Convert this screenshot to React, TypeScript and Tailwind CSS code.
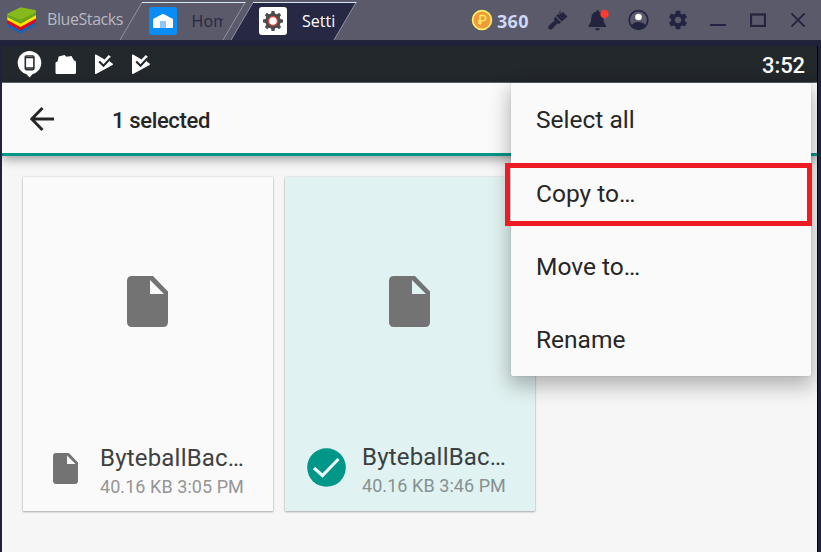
import type { ReactNode } from "react";

const ROBOTO = "font-['Roboto','Liberation_Sans',sans-serif]";
const SEGOE = "font-['Open_Sans','Noto_Sans',sans-serif]";

function Logo() {
  return (
    <svg width="30" height="27" viewBox="0 0 30 27" className="shrink-0">
      <path d="M0.3 15.5 L13.5 22 L29 14 V18.4 L14.5 26 Q13.5 26.5 12.5 26 L0.3 19.8 Z" fill="#1566b4" />
      <path d="M0.3 12.5 L13.5 18 L29 11 V15 L13.5 23.6 L0.3 16.4 Z" fill="#dd0a22" />
      <path d="M0.3 9.5 L13.5 14 L29 7.5 V11.5 L13.5 20 L0.3 13 Z" fill="#ffe500" />
      <path d="M0.3 6.8 L12.5 0.7 Q13.5 0.3 14.8 0.5 L28 3 Q29 3.2 29 4.2 V8 L15 16 Q13.5 16.8 12 16 L0.3 10 Z" fill="#86b91c" />
      <path d="M0.3 7.5 L13.5 13 L29 5 V8 L15 16 Q13.5 16.8 12 16 L0.3 10 Z" fill="#6aa51f" />
    </svg>
  );
}

function Tab({ active, icon, label, className }: { active?: boolean; icon: ReactNode; label: string; className: string }) {
  return (
    <div className={`relative h-10 w-[126px] shrink-0 ${className}`}>
      <svg width="126" height="40" viewBox="0 0 126 40" className="absolute inset-0">
        <path d="M0 40 L22 2.5 H125 L103 40 Z" fill={active ? "#272843" : "#5a5a6b"} />
        <path d="M0 40 L22 2.5" stroke="#8f93a5" strokeWidth="1" fill="none" />
        <path d="M125 2.5 L103 40" stroke="#8f93a5" strokeWidth="1" fill="none" />
        <path d="M22 2.5 H125.5" stroke="#d6e8f4" strokeWidth="1" fill="none" />
      </svg>
      <div className={`relative flex h-10 items-center pt-[2px] ${active ? "pl-[28px]" : "pl-[28.5px]"}`}>
        {icon}
        <span
          className={`ml-[15px] h-6 w-[31px] text-[16px] leading-6 whitespace-nowrap ${SEGOE} ${active ? "text-white" : "overflow-hidden tracking-[0.2px] text-[#27283f]"}`}
        >
          {label}
        </span>
      </div>
    </div>
  );
}

const GEAR =
  "M19.43 12.98c.04-.32.07-.64.07-.98s-.03-.66-.07-.98l2.11-1.65c.19-.15.24-.42.12-.64l-2-3.46c-.12-.22-.39-.3-.61-.22l-2.49 1c-.52-.4-1.08-.73-1.69-.98l-.38-2.65C14.46 2.18 14.25 2 14 2h-4c-.25 0-.46.18-.49.42l-.38 2.65c-.61.25-1.17.59-1.69.98l-2.49-1c-.23-.09-.49 0-.61.22l-2 3.46c-.13.22-.07.49.12.64l2.11 1.65c-.04.32-.07.65-.07.98s.03.66.07.98l-2.11 1.65c-.19.15-.24.42-.12.64l2 3.46c.12.22.39.3.61.22l2.49-1c.52.4 1.08.73 1.69.98l.38 2.65c.03.24.24.42.49.42h4c.25 0 .46-.18.49-.42l.38-2.65c.61-.25 1.17-.59 1.69-.98l2.49 1c.23.09.49 0 .61-.22l2-3.46c.12-.22.07-.49-.12-.64l-2.11-1.65zM12 15.5c-1.93 0-3.5-1.57-3.5-3.5s1.57-3.5 3.5-3.5 3.5 1.57 3.5 3.5-1.57 3.5-3.5 3.5z";

function HomeIcon() {
  return (
    <svg width="28" height="28" viewBox="0 0 28 28" className="shrink-0">
      <rect width="28" height="28" rx="3" fill="#0a8cf5" />
      <path d="M4 12 L13 7.2 Q14 6.7 15 7.2 L24 12 V20 Q24 21 23 21 H5 Q4 21 4 20 Z" fill="#fff" />
      <rect x="11" y="14" width="6" height="7" fill="#8fc8f8" />
    </svg>
  );
}

function SettingsTabIcon() {
  return (
    <svg width="28" height="28" viewBox="0 0 28 28" className="shrink-0">
      <rect width="28" height="28" rx="3" fill="#fff" />
      <g fill="#4c4c4c" transform="translate(14 14)">
        <circle r="7.8" />
        {[0, 45, 90, 135, 180, 225, 270, 315].map((a) => (
          <path key={a} d="M-2 -7 L-1.5 -10 H1.5 L2 -7 Z" transform={`rotate(${a})`} />
        ))}
      </g>
      <circle cx="14" cy="14" r="4.4" fill="#fff" stroke="#e0483c" strokeWidth="1.3" />
    </svg>
  );
}

function TitleBar() {
  return (
    <header className="flex h-10 bg-[#5a5a6b]">
      <div className="flex h-10 w-[120px] shrink-0 items-center pl-[7px]">
        <Logo />
        <span className={`ml-[10px] pb-[2px] text-[16px] tracking-[-0.42px] whitespace-nowrap text-[#b9b9bf] ${SEGOE}`}>BlueStacks</span>
      </div>
      <Tab className="" icon={<HomeIcon />} label="Home" />
      <Tab className="-ml-[15px]" active icon={<SettingsTabIcon />} label="Setti" />
      <div className="flex h-10 flex-1 items-center justify-end">
        <svg width="22" height="22" viewBox="0 0 22 22" className="shrink-0">
          <circle cx="11" cy="11" r="9.4" fill="#f29a38" stroke="#fff06a" strokeWidth="1.7" />
          <path d="M9 16 V6.4 H12 A2.6 2.6 0 0 1 12 11.8 H7 M7 13.9 H10.5" fill="none" stroke="#ffef66" strokeWidth="1.5" />
        </svg>
        <span className={`ml-[4px] w-[51px] pt-[1px] text-[18px] leading-6 font-bold tracking-[0.3px] text-[#cdd7f6] ${SEGOE}`}>360</span>
        <svg width="20" height="20" viewBox="0 0 20 20" className="mr-[19px] shrink-0" fill="#23243f">
          <path d="M12 0.5 L14.2 2.8 L14.7 1.7 L19.5 6.4 L13.8 11.5 L8.2 5.8 L10.4 3.8 L11.3 4.8 L12.1 4 L10.8 2.4 L11.5 1.8 L13.6 4 L14.3 3.3 L11.5 0.8 Z" />
          <path d="M7.4 6.7 L13 12.4 L11.6 13.7 L9.3 13.5 L4.2 19 Q2.4 20.2 0.8 18.9 Q-0.4 17.4 0.8 15.8 L6.4 10.8 L6.1 8.2 Z" />
        </svg>
        <svg width="22" height="22" viewBox="0 0 22 22" className="mr-[18px] shrink-0">
          <path d="M9.5 1.5 Q10.5 0 11.5 1.5 V2.5 Q16.3 3.5 16.3 9 Q16.4 14 19 16.5 V18 H1.5 V16.5 Q4.2 14 4.3 9 Q4.4 3.5 9.5 2.5 Z" fill="#23243f" />
          <path d="M8 19.3 H13 Q12.5 21.5 10.5 21.5 T8 19.3" fill="#23243f" />
          <circle cx="17.5" cy="5" r="4.2" fill="#ff3b30" />
        </svg>
        <svg width="22" height="22" viewBox="0 0 22 22" className="mr-[18px] shrink-0">
          <circle cx="11.5" cy="11" r="9.3" fill="#5a5a6b" stroke="#23243f" strokeWidth="1.7" />
          <path d="M4.5 17 Q6 13 11.5 13 T18.5 17 Q15.5 20.5 11.5 20.5 T4.5 17" fill="#23243f" />
          <circle cx="11.5" cy="8" r="3.3" fill="#fff" />
        </svg>
        <svg width="22" height="22" viewBox="0 0 24 24" className="mr-[21px] shrink-0" fill="#23243f">
          <path d={GEAR} />
        </svg>
        <svg width="16" height="16" viewBox="0 0 16 16" className="mr-[24px] shrink-0">
          <path d="M0 13 H16" stroke="#23243f" strokeWidth="2" />
        </svg>
        <svg width="16" height="14" viewBox="0 0 16 14" className="mr-[25px] shrink-0">
          <rect x="1" y="1.5" width="14" height="11.5" fill="none" stroke="#23243f" strokeWidth="2.2" />
        </svg>
        <svg width="14" height="14" viewBox="0 0 14 14" className="mr-[16px] shrink-0">
          <path d="M0.5 0.5 L13.5 13.5 M13.5 0.5 L0.5 13.5" stroke="#23243f" strokeWidth="1.9" />
        </svg>
      </div>
    </header>
  );
}

function PlayCheck() {
  return (
    <svg width="20" height="21" viewBox="0 0 20 21" className="shrink-0">
      <path d="M1 1.2 Q1 0.2 2 0.6 L8.5 4.2 L10.5 5.6 L14.8 1 L17 3 L15.6 7.6 L18.6 9.6 Q19.4 10.3 18.6 10.9 L2 19.9 Q1 20.3 1 19.3 Z" fill="#fff" />
      <path d="M5.2 7.6 L9.5 11.7 L17 3.8" fill="none" stroke="#23282c" strokeWidth="2.1" />
    </svg>
  );
}

function StatusBar() {
  return (
    <div className="flex h-[37px] items-center border-b border-[#66696b] bg-[#23282c] pr-[12px] pl-[15px]">
      <svg width="25" height="27" viewBox="0 0 25 27" className="shrink-0">
        <path d="M12.5 0 A12 12 0 0 1 24.3 12 Q24.2 18 18.5 22 L15.5 23.3 L12.5 26.5 L9.5 23.3 L6.5 22 Q0.8 18 0.7 12 A12 12 0 0 1 12.5 0" fill="#fff" />
        <rect x="8.3" y="5" width="8.6" height="13.6" rx="1" fill="#fff" stroke="#2c3033" strokeWidth="1.6" />
        <path d="M8 6.6 H17 M8 17 H17" stroke="#2c3033" strokeWidth="1.4" />
      </svg>
      <svg width="22" height="21" viewBox="0 0 22 21" className="ml-[13px] shrink-0" fill="#fff">
        <path d="M2.5 7.5 L3.7 2.6 L9.5 1 L11.5 2.8 L16.5 2 L19 6.5 Q21 6.7 21 8.5 V18.5 Q21 20 19.5 20 H2 Q0.5 20 0.5 18.5 V8.5 Z" />
      </svg>
      <div className="ml-[17px] flex gap-[17px]">
        <PlayCheck />
        <PlayCheck />
      </div>
      <span className={`ml-auto pt-[3px] text-[22px] leading-6 font-medium tracking-[-0.1px] text-white ${ROBOTO}`}>3:52</span>
    </div>
  );
}

function FileIcon({ width, height }: { width: number; height: number }) {
  return (
    <svg width={width} height={height} viewBox="0 0 41 51" className="shrink-0">
      <path
        fillRule="evenodd"
        d="M5 0 H26 L41 15.5 V46 Q41 51 36 51 H5 Q0 51 0 46 V5 Q0 0 5 0 M23 4 V18 H37 Z"
        fill="#737373"
      />
    </svg>
  );
}

function FileCard({ selected, time }: { selected?: boolean; time: string }) {
  return (
    <div
      className={`flex h-[334px] w-[250px] flex-col shadow-[0_1px_2px_rgba(0,0,0,0.28),0_0_1px_rgba(0,0,0,0.25)] ${selected ? "bg-[#e0f2f1]" : "bg-[#fafafa]"}`}
    >
      <div className="flex h-[250px] items-center justify-center pr-[2px] pb-[2px]">
        <FileIcon width={41} height={51} />
      </div>
      <div className={`flex h-[84px] ${selected ? "pl-[22px]" : "pl-[30px]"}`}>
        <div className={selected ? "w-[55px] pt-[21px]" : "w-[47px] pt-[26px]"}>
          {selected ? (
            <svg width="39" height="39" viewBox="0 0 39 39">
              <circle cx="19.5" cy="19.5" r="19.3" fill="#009688" />
              <path d="M7 20 L15.5 27.5 L31.5 11" fill="none" stroke="#eefaf9" strokeWidth="3.1" />
            </svg>
          ) : (
            <FileIcon width={25} height={31} />
          )}
        </div>
        <div className={`${ROBOTO} ${selected ? "pt-[15px]" : "pt-4"}`}>
          <div
            className={`text-[24px] leading-[30px] tracking-[0.2px] whitespace-nowrap ${selected ? "text-[#3a3f3f]" : "text-[#404040]"}`}
          >
            ByteballBac…
          </div>
          <div
            className={`text-[18px] leading-[28px] tracking-[0.06px] whitespace-nowrap ${selected ? "text-[#869190]" : "text-[#959595]"}`}
          >
            40.16 KB {time}
          </div>
        </div>
      </div>
    </div>
  );
}

function Menu() {
  return (
    <div
      className={`absolute top-[37px] right-[6px] h-[293px] w-[300px] rounded-[2px] bg-[#fafafa] text-[24.5px] text-[#262626] shadow-[0_8px_20px_2px_rgba(0,0,0,0.28),0_0_2px_rgba(0,0,0,0.15)] ${ROBOTO}`}
    >
      {["Select all", "Copy to…", "Move to…", "Rename"].map((item) => (
        <div key={item} className="flex h-[73.4px] items-center pt-[2px] pl-[25px]">
          {item}
        </div>
      ))}
      <div className="absolute top-[80px] left-[-6px] h-[63px] w-[307px] border-[5px] border-[#ed1c24]" />
    </div>
  );
}

export default function App() {
  return (
    <div className="flex h-[552px] w-[821px] flex-col overflow-hidden bg-[#20213a]">
      <TitleBar />
      <main className="relative mt-[6px] mr-[3px] ml-[2px] flex-1 overflow-hidden border-r border-black bg-[#f6f6f6]">
        <StatusBar />
        <div className="flex h-[73px] items-center border-b-[3px] border-[#009688] bg-[#fafafa] pl-[28px] shadow-[0_3px_10px_rgba(0,0,0,0.38)]">
          <svg width="24" height="24" viewBox="0 0 24 24" className="mt-[2px] shrink-0">
            <path d="M24 12 H2 M12.5 1 L1.7 12 L12.5 23" fill="none" stroke="#262626" strokeWidth="2.9" />
          </svg>
          <span className={`mt-[5px] ml-[58px] text-[22px] leading-7 font-medium tracking-[-0.35px] text-[#262626] ${ROBOTO}`}>
            1 selected
          </span>
        </div>
        <div className="flex gap-[12px] pt-[21px] pl-[21px]">
          <FileCard time="3:05 PM" />
          <FileCard selected time="3:46 PM" />
        </div>
        <Menu />
      </main>
    </div>
  );
}
